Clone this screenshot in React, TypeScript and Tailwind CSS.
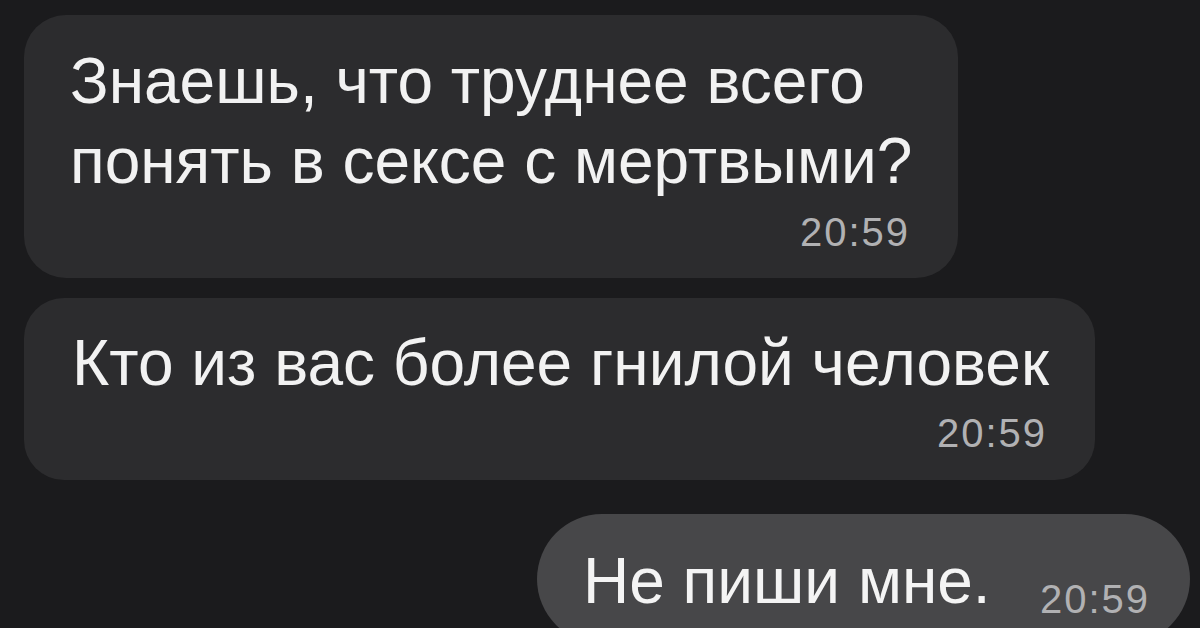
import React from "react";

const font = { fontFamily: '"Liberation Sans", Arial, sans-serif' };

function Time({ className = "" }: { className?: string }) {
  return (
    <span className={"text-[40px] leading-[40px] tracking-[2px] whitespace-nowrap text-[#b1b1b3] " + className}>
      20:59
    </span>
  );
}

export default function App() {
  return (
    <div
      className="w-[1200px] h-[628px] overflow-hidden bg-[#1b1b1d] pt-[15px] pl-[24px] pr-[10px] flex flex-col"
      style={font}
    >
      {/* incoming 1 */}
      <div className="w-[934px] h-[263px] shrink-0 rounded-[42px] bg-[#2c2c2e] pl-[46px] pr-[48px] pt-[26px] flex flex-col">
        <p className="text-[64px] leading-[80px] whitespace-nowrap text-[#f2f2f2]">
          Знаешь, что труднее всего
          <br />
          понять в сексе с мертвыми?
        </p>
        <Time className="self-end mt-[11px]" />
      </div>

      {/* incoming 2 */}
      <div className="w-[1071px] h-[182px] shrink-0 mt-[20px] rounded-[40px] bg-[#2c2c2e] pl-[48px] pr-[48px] pt-[25px] flex flex-col">
        <p className="text-[64px] leading-[80px] whitespace-nowrap text-[#f2f2f2]">
          Кто из вас более гнилой человек
        </p>
        <Time className="self-end mt-[10px]" />
      </div>

      {/* outgoing */}
      <div className="self-end w-[653px] h-[130px] shrink-0 mt-[34px] rounded-[65px] bg-[#474749] pl-[46px] pr-[40px] pt-[27px] flex items-start justify-between">
        <p className="text-[64px] leading-[80px] whitespace-nowrap text-[#f4f4f4]">Не пиши мне.</p>
        <Time className="mt-[38px]" />
      </div>
    </div>
  );
}
